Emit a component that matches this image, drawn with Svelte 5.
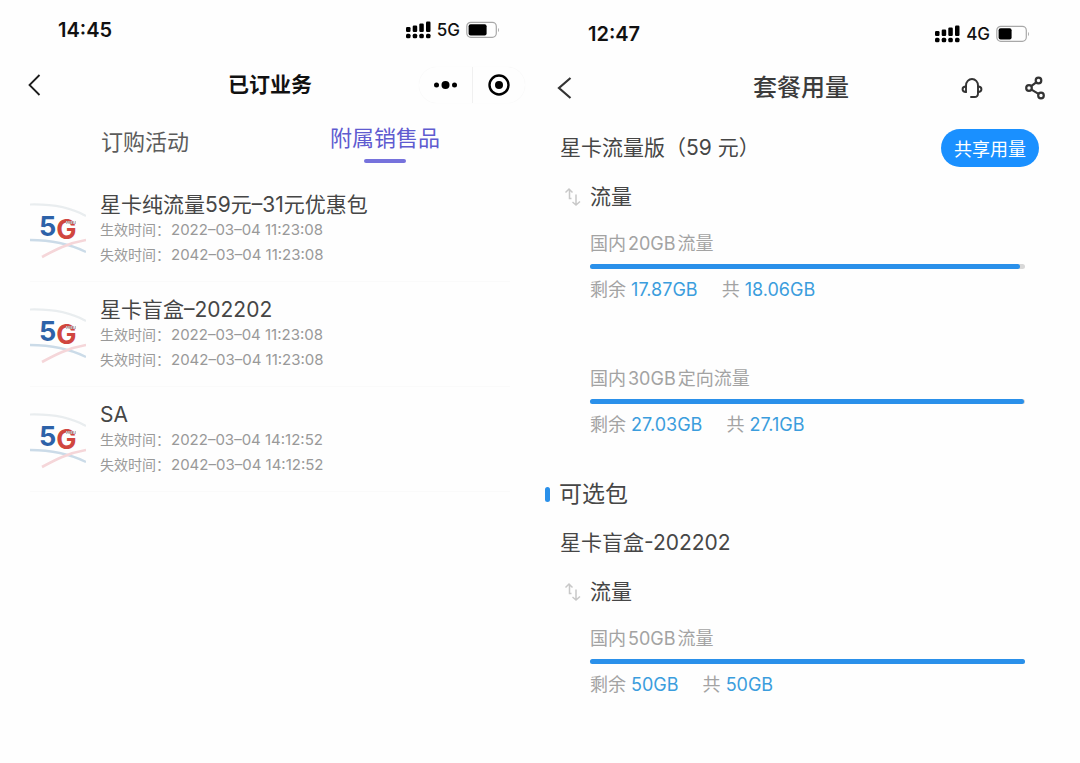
<script>
	// Ordered services (left) and plan usage (right), shown side by side

	let activeTab = $state('addons');

	const tabs = [
		{ id: 'activities', label: '订购活动' },
		{ id: 'addons', label: '附属销售品' }
	];

	const services = [
		{ name: '星卡纯流量59元–31元优惠包', start: '2022–03–04 11:23:08', end: '2042–03–04 11:23:08' },
		{ name: '星卡盲盒–202202', start: '2022–03–04 11:23:08', end: '2042–03–04 11:23:08' },
		{ name: 'SA', start: '2022–03–04 14:12:52', end: '2042–03–04 14:12:52' }
	];

	const plan = {
		name: '星卡流量版（59 元）',
		usage: [
			{ quota: '20GB', kind: '流量', left: 17.87, total: 18.06 },
			{ quota: '30GB', kind: '定向流量', left: 27.03, total: 27.1 }
		]
	};

	const optional = {
		name: '星卡盲盒-202202',
		usage: [{ quota: '50GB', kind: '流量', left: 50, total: 50 }]
	};

	// Share of the allowance that is still available
	function percent(item) {
		return (item.left / item.total) * 100;
	}
</script>

{#snippet status(time, network, level)}
	<div class="status">
		<span class="time">{time}</span>
		<svg class="signal" width="26" height="18" viewBox="0 0 26 18" aria-hidden="true">
			<rect x="0" y="6" width="4.5" height="5" rx="1.2" />
			<rect x="6.7" y="4.5" width="4.5" height="6.5" rx="1.2" />
			<rect x="13.3" y="2.5" width="4.5" height="8.5" rx="1.2" />
			<rect x="20" y="0.5" width="4.5" height="10.5" rx="1.2" />
			<rect x="0" y="12.8" width="4.5" height="4.5" rx="1.5" />
			<rect x="6.7" y="12.8" width="4.5" height="4.5" rx="1.5" />
			<rect x="13.3" y="12.8" width="4.5" height="4.5" rx="1.5" />
			<rect x="20" y="12.8" width="4.5" height="4.5" rx="1.5" />
		</svg>
		<span class="network">{network}</span>
		<svg width="34" height="18" viewBox="0 0 34 18" aria-hidden="true">
			<rect x="0.8" y="1.3" width="29.5" height="15" rx="4" fill="none" stroke="#a8a8a8" stroke-width="1.2" />
			<rect x="2.6" y="3.2" width={level} height="11.2" rx="2" fill="#000" />
			<path d="M32 7v4c1.3-.6 1.3-3.4 0-4z" fill="#a8a8a8" />
		</svg>
	</div>
{/snippet}

{#snippet logo()}
	<svg class="logo" width="56" height="58" viewBox="0 0 56 58" aria-hidden="true">
		<path d="M0 3.5C20 3 40 6 56 15" fill="none" stroke="#e9edef" stroke-width="2.2" />
		<path d="M0 39C20 39 40 43 56 51" fill="none" stroke="#cbdbe8" stroke-width="2.4" />
		<path d="M12 56C25 49 38 42 56 39" fill="none" stroke="#f5d6d9" stroke-width="2.6" />
		<text x="9" y="35" class="logo-text"><tspan class="logo-five">5</tspan><tspan class="logo-g" dy="3">G</tspan></text>
		<path d="M36 21.5h10" stroke="#b9c0c4" stroke-width="3" stroke-dasharray="1.5 .7" />
	</svg>
{/snippet}

{#snippet usageGroup(group)}
	<div class="flow">
		<svg width="18" height="20" viewBox="0 0 18 20" fill="none" stroke="#c8c8c8" stroke-width="1.5" aria-hidden="true">
			<path d="M1.500 5.500L5 2l3.500 3.500M5.500 2v9.500h2" />
			<path d="M12 7.500V17.500M8.500 15l3.500 3 4-3.500" />
		</svg>
		<h4>流量</h4>
	</div>
	{#each group.usage as item}
		<div class="usage">
			<div class="usage-label">国内<span class="quota">{item.quota}</span>{item.kind}</div>
			<div class="bar" role="progressbar" aria-label={item.kind} aria-valuenow={item.left} aria-valuemax={item.total}>
				<div class="bar-fill" style="width: {percent(item)}%"></div>
			</div>
			<div class="stats">
				<span>剩余 <b>{item.left}GB</b></span>
				<span>共 <b>{item.total}GB</b></span>
			</div>
		</div>
	{/each}
{/snippet}

<main class="screens">
	<section class="screen ordered">
		{@render status('14:45', '5G', 18)}
		<header class="nav">
			<button type="button" class="icon-button back" aria-label="返回">
				<svg width="24" height="24" viewBox="0 0 24 24" fill="none" stroke="#1c1c1c" stroke-width="1.8">
					<path d="M16.5 2L6.5 12l10 10" />
				</svg>
			</button>
			<h1>已订业务</h1>
			<div class="capsule">
				<button type="button" class="icon-button" aria-label="更多">
					<svg width="26" height="24" viewBox="0 0 26 24">
						<circle cx="3.5" cy="12" r="2.5" />
						<circle cx="12.5" cy="12" r="4" />
						<circle cx="21.5" cy="12" r="2.5" />
					</svg>
				</button>
				<button type="button" class="icon-button" aria-label="关闭">
					<svg width="24" height="24" viewBox="0 0 24 24">
						<circle cx="12" cy="12" r="9.5" fill="none" stroke="#000" stroke-width="2.4" />
						<circle cx="12" cy="12" r="4" />
					</svg>
				</button>
			</div>
		</header>

		<div class="tabs" role="tablist">
			{#each tabs as tab}
				<button
					type="button"
					role="tab"
					class="tab"
					class:active={activeTab === tab.id}
					aria-selected={activeTab === tab.id}
					onclick={() => (activeTab = tab.id)}
				>
					{tab.label}
				</button>
			{/each}
		</div>

		<ul class="services">
			{#each services as service}
				<li class="service">
					{@render logo()}
					<div>
						<h2>{service.name}</h2>
						<p>生效时间：<time>{service.start}</time></p>
						<p>失效时间：<time>{service.end}</time></p>
					</div>
				</li>
			{/each}
		</ul>
	</section>

	<section class="screen plan">
		{@render status('12:47', '4G', 13)}
		<header class="nav">
			<button type="button" class="icon-button back" aria-label="返回">
				<svg width="18" height="24" viewBox="0 0 18 24" fill="none" stroke="#333" stroke-width="2.2">
					<path d="M14.5 2L3 12l11.5 10" />
				</svg>
			</button>
			<h1>套餐用量</h1>
			<div class="actions">
				<button type="button" class="icon-button" aria-label="客服">
					<svg width="22" height="22" viewBox="0 0 22 22" fill="none" stroke="#333" stroke-width="1.9" stroke-linecap="round">
						<path d="M5 15V8.500a6 6.500 0 0 1 12 0v8c0 2.500-1.500 3.500-3.500 3.500h-3.500" />
						<path d="M5 9.500C.4 9.500 .4 15 5 15M17 9.500c4.600 0 4.600 5.500 0 5.500" />
					</svg>
				</button>
				<button type="button" class="icon-button" aria-label="分享">
					<svg width="22" height="24" viewBox="0 0 22 24" fill="none" stroke="#333" stroke-width="2.2">
						<circle cx="5" cy="12" r="2.8" />
						<circle cx="14.5" cy="4.5" r="2.8" />
						<circle cx="17" cy="19.5" r="2.8" />
						<path d="M7.2 10.2l5-3.8M7.500 13.600l7 4.300" />
					</svg>
				</button>
			</div>
		</header>

		<div class="group">
			<div class="group-header">
				<h3>{plan.name}</h3>
				<button type="button" class="share">共享用量</button>
			</div>
			{@render usageGroup(plan)}
		</div>

		<h2 class="section-title">可选包</h2>
		<div class="group optional">
			<div class="group-header">
				<h3>{optional.name}</h3>
			</div>
			{@render usageGroup(optional)}
		</div>
	</section>
</main>

<style>
	:global(body) {
		margin: 0;
		background: #fefefe;
	}

	.screens {
		display: grid;
		grid-template-columns: 1fr 1fr;
		font-family: Inter, "Noto Sans CJK SC", sans-serif;
		color: #464646;
	}

	h1,
	h2,
	h3,
	h4,
	p,
	ul {
		margin: 0;
		padding: 0;
		font-weight: 400;
	}

	button {
		border: 0;
		padding: 0;
		background: none;
		font-family: inherit;
		cursor: pointer;
	}

	svg {
		display: block;
	}

	/* Phone status bar */
	.status {
		display: flex;
		align-items: center;
		height: 60px;
		padding: 0 40px 0 58px;
		color: #111;
	}

	.plan .status {
		height: 67px;
		padding: 0 50px 0 48px;
	}

	.time {
		margin-right: auto;
		font-size: 20px;
		font-weight: 600;
	}

	.network {
		margin: 0 6px 0 5px;
		font-size: 17px;
		font-weight: 500;
	}

	/* Title bar */
	.nav {
		display: grid;
		grid-template-columns: 1fr auto 1fr;
		align-items: center;
		height: 50px;
		padding: 0 15px;
	}

	.plan .nav {
		height: 42px;
		padding: 0 34px 0 16px;
	}

	.icon-button {
		display: flex;
		align-items: center;
		justify-content: center;
	}

	.back {
		justify-self: start;
	}

	.ordered .back {
		width: 40px;
	}

	h1 {
		font-size: 21px;
		font-weight: 700;
		line-height: 32px;
		color: #111;
	}

	.plan h1 {
		font-size: 24px;
		font-weight: 500;
		color: #3c3c3c;
	}

	.capsule {
		display: flex;
		justify-self: end;
		height: 36px;
		border-radius: 18px;
		box-shadow: 0 0 1px #eee;
	}

	.capsule .icon-button {
		width: 53px;
	}

	.capsule .icon-button + .icon-button {
		border-left: 1px solid #f0f0f0;
	}

	.actions {
		display: flex;
		align-items: center;
		justify-self: end;
		gap: 41px;
	}

	/* Tabs */
	.tabs {
		display: grid;
		grid-template-columns: 1fr 1fr;
		align-items: start;
		padding: 14px 35px 14px 25px;
	}

	.tab {
		padding-top: 4px;
		font-size: 22px;
		line-height: 28px;
		color: #5c5c5c;
	}

	.tab.active {
		padding-top: 0;
		color: #5f5bd0;
	}

	.tab.active::after {
		content: "";
		display: block;
		width: 42px;
		height: 4px;
		margin: 7px auto 0;
		border-radius: 2px;
		background: #7672dc;
	}

	/* Ordered services */
	.services {
		list-style: none;
		padding: 0 30px;
	}

	.service {
		display: flex;
		align-items: center;
		gap: 14px;
		padding: 16px 0 14px;
		border-bottom: 1px solid #fafafa;
	}

	.service h2 {
		font-size: 21px;
		line-height: 24px;
	}

	.service p {
		font-size: 14px;
		line-height: 25px;
		color: #999;
	}

	.service time {
		margin-left: 1px;
		font-size: 15px;
	}

	.logo {
		flex-shrink: 0;
	}

	.logo-text {
		font-family: Inter, sans-serif;
		font-size: 27px;
		font-weight: 700;
	}

	.logo-five {
		fill: #2d62a8;
	}

	.logo-g {
		fill: #d0463f;
	}

	/* Plan usage */
	.group {
		padding: 15px 41px 0 20px;
	}

	.group.optional {
		padding-top: 8px;
	}

	.group-header {
		display: flex;
		align-items: center;
		justify-content: space-between;
		height: 48px;
		margin-bottom: 15px;
	}

	h3,
	h4 {
		font-size: 21px;
		line-height: 20px;
	}

	.share {
		width: 98px;
		height: 38px;
		border-radius: 19px;
		background: #1a90ff;
		font-size: 18px;
		color: #fff;
	}

	.flow {
		display: flex;
		align-items: center;
		gap: 8px;
		padding-left: 4px;
	}

	.usage {
		padding: 24px 14px 39px 30px;
	}

	.usage-label,
	.stats {
		font-size: 18px;
		line-height: 26px;
		color: #a3a3a3;
	}

	.quota {
		margin: 0 2px;
	}

	.bar {
		height: 5px;
		margin: 7px 0 8px;
		border-radius: 3px;
		background: #d8d8d8;
	}

	.bar-fill {
		height: 100%;
		border-radius: 3px;
		background: #2a90ea;
	}

	.stats {
		display: flex;
		gap: 24px;
	}

	.stats b {
		font-weight: 400;
		color: #3b9ddd;
	}

	.section-title {
		display: flex;
		align-items: center;
		gap: 9px;
		padding-left: 5px;
		font-size: 23px;
		line-height: 34px;
	}

	.section-title::before {
		content: "";
		width: 5px;
		height: 15px;
		border-radius: 3px;
		background: #2a90ea;
	}
</style>
